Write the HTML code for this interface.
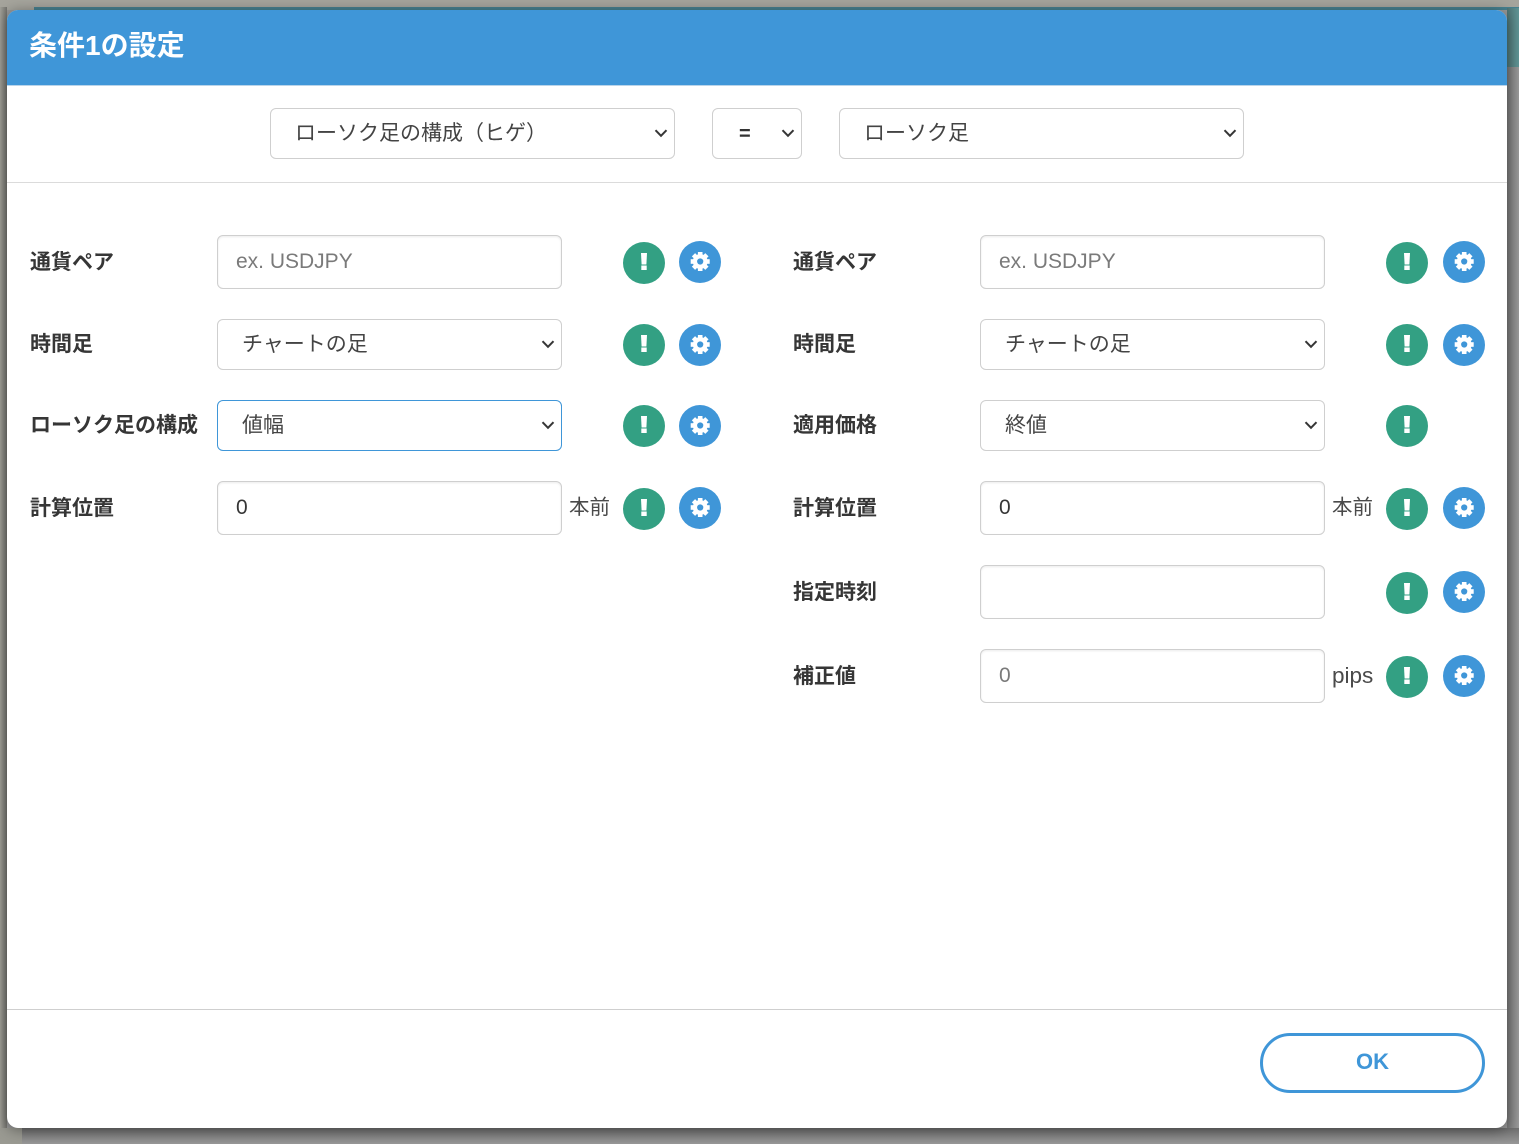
<!DOCTYPE html>
<html lang="ja"><head><meta charset="utf-8"><title>条件1の設定</title>
<style>
*{box-sizing:border-box}
html,body{margin:0;padding:0}
body{width:1519px;height:1144px;position:relative;overflow:hidden;background:#999;font-family:"Liberation Sans","Noto Sans CJK JP",sans-serif;color:#363636}
.a{position:absolute}
.modal{left:7px;top:10px;width:1500px;height:1118px;background:#fff;border-radius:11px;box-shadow:0 2px 14px rgba(0,0,0,.4);overflow:hidden}
.head{left:0;top:0;width:1500px;height:76px;background:#3f96d8;border-bottom:1px solid #b9d4ea}
.title{left:22px;top:17px;font-size:28px;line-height:38px;font-weight:700;color:#fff;white-space:nowrap}
.hr{left:0;width:1500px;height:1px;background:#dbdbdb}
.box{position:absolute;background:#fff;border:1px solid #cfcfcf;border-radius:6px;font-size:21px;line-height:30px;white-space:nowrap}
.sel{height:51px;padding:10px 0 0 24px;color:#444}
.inp{height:54px;padding:11px 0 0 18px;color:#363636;box-shadow:inset 0 1px 2px rgba(10,10,10,.08)}
.ph{color:#7a7a7a}
.chev{position:absolute;right:6px;top:19px;width:14px;height:10px}
.lab{position:absolute;font-size:21px;line-height:30px;font-weight:700;color:#363636;white-space:nowrap;margin-top:2px}
.unit{position:absolute;font-size:20.500px;line-height:30px;color:#4a4a4a;white-space:nowrap;margin-top:1px}
.ic{position:absolute;width:42px;height:42px}
.ok{left:1260px;top:1033px;width:225px;height:60px;border:3px solid #3f96d8;border-radius:30px;background:#fff;color:#3f96d8;font-size:22px;font-weight:700;text-align:center;line-height:52px}
</style></head><body>
<div class="a" style="left:0;top:0;width:1519px;height:7px;background:#a5a49c"></div>
<div class="a" style="left:0;top:7px;width:7px;height:1137px;background:linear-gradient(90deg,#a09f97,#74746f)"></div>
<div class="a" style="left:0;top:1128px;width:22px;height:16px;background:#9a9a92"></div>
<div class="a" style="left:22px;top:1128px;width:1497px;height:16px;background:linear-gradient(180deg,#6f6f6f,#989898)"></div>
<div class="a" style="left:7px;top:7px;width:1512px;height:3px;background:#a5a49c"></div>
<div class="a" style="left:34px;top:7px;width:1485px;height:3px;background:#47808f"></div>
<div class="a" style="left:1507px;top:8px;width:12px;height:59px;background:linear-gradient(90deg,#4f7475,#5f9494)"></div>
<div class="a" style="left:1507px;top:67px;width:12px;height:1061px;background:linear-gradient(90deg,#777,#999)"></div>

<div class="a modal">
<div class="a head"></div>
<div class="a title">条件1の設定</div>
<div class="a hr" style="top:172px"></div>
<div class="a hr" style="top:999px;background:#cfcfcf"></div>
</div>

<svg width="0" height="0" style="position:absolute"><defs>
<symbol id="c" viewBox="0 0 14 10"><path d="M1.500 2.200 7 7.800 12.500 2.200" fill="none" stroke="#363636" stroke-width="2"/></symbol>
<symbol id="w" viewBox="0 0 42 42"><circle cx="21" cy="21" r="21" fill="#33a083"/><path d="M18 11h6l-.6 11.500h-4.800z" fill="#fff"/><rect x="18.300" y="23.500" width="5.400" height="4.500" fill="#fff"/></symbol>
<symbol id="g" viewBox="0 0 42 42"><circle cx="21" cy="21" r="21" fill="#3f96d8"/><g fill="#fff" transform="translate(21.200 20.500)"><circle r="7.400"/><rect x="-2.300" y="-9.500" width="4.600" height="19"/><rect x="-2.300" y="-9.500" width="4.600" height="19" transform="rotate(45)"/><rect x="-2.300" y="-9.500" width="4.600" height="19" transform="rotate(90)"/><rect x="-2.300" y="-9.500" width="4.600" height="19" transform="rotate(135)"/></g><circle cx="21.200" cy="20.500" r="3.100" fill="#3f96d8"/></symbol>
</defs></svg>

<div class="box sel" style="left:270px;top:108px;width:405px;">ローソク足の構成（ヒゲ）<svg class="chev"><use href="#c"/></svg></div>
<div class="box sel" style="left:712px;top:108px;width:90px;padding-left:26px;font-weight:700;color:#333;font-size:20px;">=<svg class="chev"><use href="#c"/></svg></div>
<div class="box sel" style="left:839px;top:108px;width:405px;">ローソク足<svg class="chev"><use href="#c"/></svg></div>

<div class="lab" style="left:30px;top:246px">通貨ペア</div>
<div class="box inp ph" style="left:217px;top:235px;width:345px">ex. USDJPY</div>
<svg class="ic" style="left:623px;top:242px"><use href="#w"/></svg>
<svg class="ic" style="left:679px;top:241px"><use href="#g"/></svg>

<div class="lab" style="left:30px;top:328px">時間足</div>
<div class="box sel" style="left:217px;top:319px;width:345px">チャートの足<svg class="chev"><use href="#c"/></svg></div>
<svg class="ic" style="left:623px;top:324px"><use href="#w"/></svg>
<svg class="ic" style="left:679px;top:324px"><use href="#g"/></svg>

<div class="lab" style="left:30px;top:409px">ローソク足の構成</div>
<div class="box sel" style="left:217px;top:400px;width:345px;border-color:#3f96d8">値幅<svg class="chev"><use href="#c"/></svg></div>
<svg class="ic" style="left:623px;top:405px"><use href="#w"/></svg>
<svg class="ic" style="left:679px;top:405px"><use href="#g"/></svg>

<div class="lab" style="left:30px;top:492px">計算位置</div>
<div class="box inp" style="left:217px;top:481px;width:345px">0</div>
<div class="unit" style="left:569px;top:492px">本前</div>
<svg class="ic" style="left:623px;top:488px"><use href="#w"/></svg>
<svg class="ic" style="left:679px;top:487px"><use href="#g"/></svg>

<div class="lab" style="left:793px;top:246px">通貨ペア</div>
<div class="box inp ph" style="left:980px;top:235px;width:345px">ex. USDJPY</div>
<svg class="ic" style="left:1386px;top:242px"><use href="#w"/></svg>
<svg class="ic" style="left:1443px;top:241px"><use href="#g"/></svg>

<div class="lab" style="left:793px;top:328px">時間足</div>
<div class="box sel" style="left:980px;top:319px;width:345px">チャートの足<svg class="chev"><use href="#c"/></svg></div>
<svg class="ic" style="left:1386px;top:324px"><use href="#w"/></svg>
<svg class="ic" style="left:1443px;top:324px"><use href="#g"/></svg>

<div class="lab" style="left:793px;top:409px">適用価格</div>
<div class="box sel" style="left:980px;top:400px;width:345px">終値<svg class="chev"><use href="#c"/></svg></div>
<svg class="ic" style="left:1386px;top:405px"><use href="#w"/></svg>

<div class="lab" style="left:793px;top:492px">計算位置</div>
<div class="box inp" style="left:980px;top:481px;width:345px">0</div>
<div class="unit" style="left:1332px;top:492px">本前</div>
<svg class="ic" style="left:1386px;top:488px"><use href="#w"/></svg>
<svg class="ic" style="left:1443px;top:487px"><use href="#g"/></svg>

<div class="lab" style="left:793px;top:576px">指定時刻</div>
<div class="box inp" style="left:980px;top:565px;width:345px"></div>
<svg class="ic" style="left:1386px;top:572px"><use href="#w"/></svg>
<svg class="ic" style="left:1443px;top:571px"><use href="#g"/></svg>

<div class="lab" style="left:793px;top:660px">補正値</div>
<div class="box inp ph" style="left:980px;top:649px;width:345px">0</div>
<div class="unit" style="left:1332px;top:660px;font-size:22.500px">pips</div>
<svg class="ic" style="left:1386px;top:656px"><use href="#w"/></svg>
<svg class="ic" style="left:1443px;top:655px"><use href="#g"/></svg>

<div class="a ok">OK</div>
</body></html>
